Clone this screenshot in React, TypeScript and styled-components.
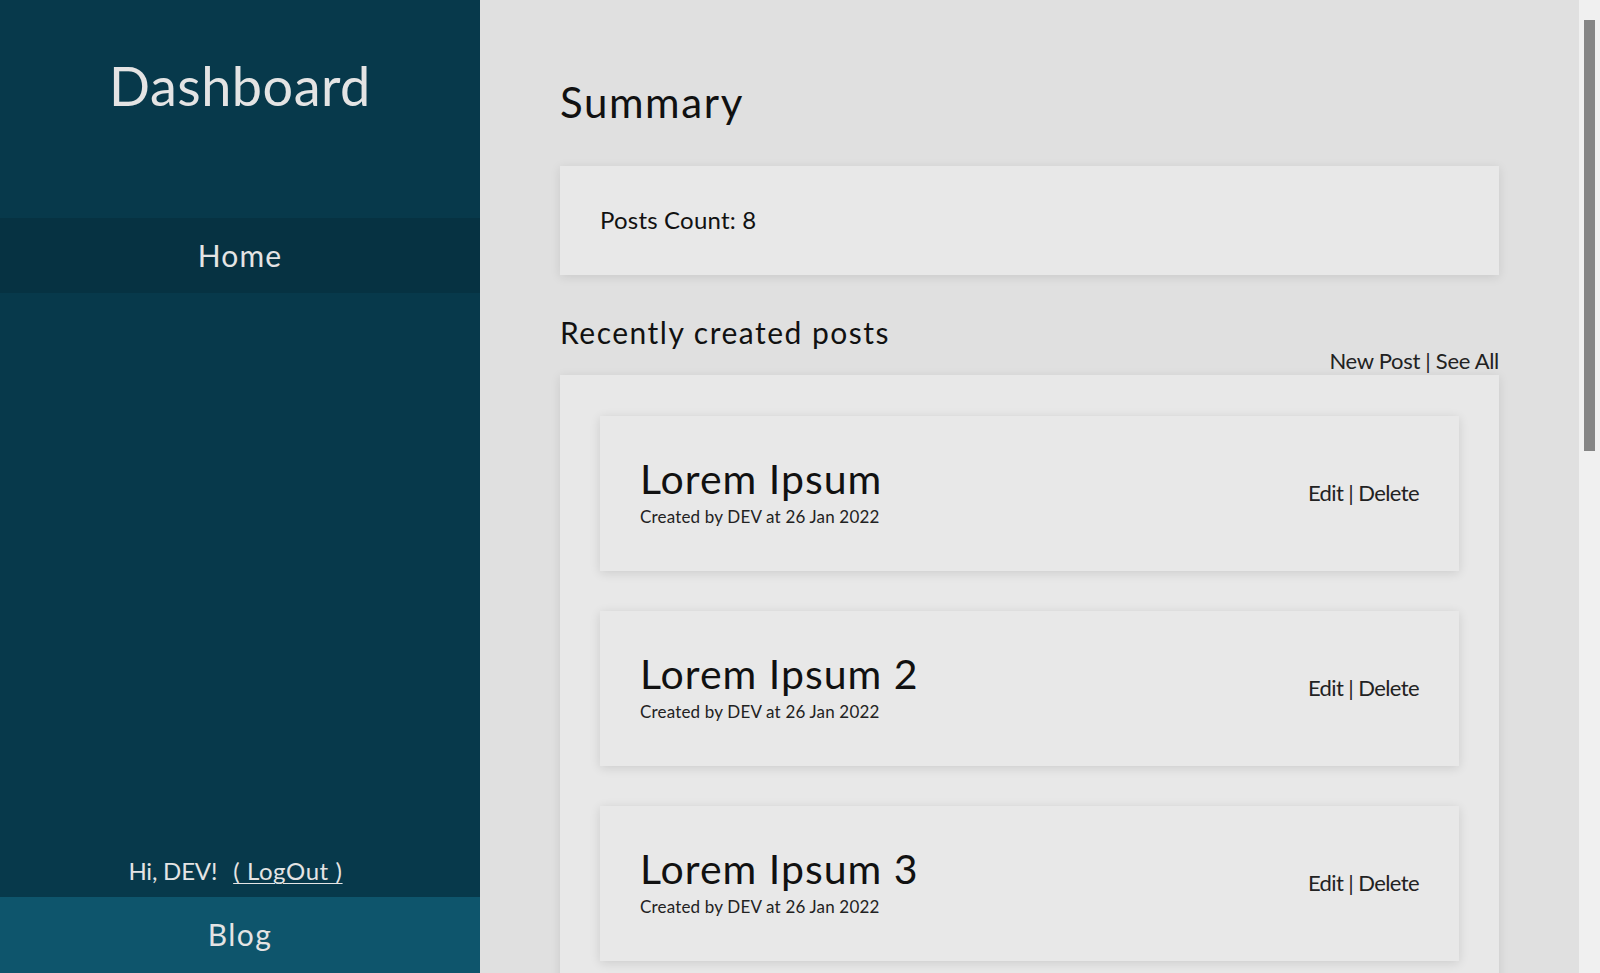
import React, { useEffect, useState } from "react";
import styled, { createGlobalStyle } from "styled-components";

const GlobalStyle = createGlobalStyle`
  html, body { margin: 0; padding: 0; }
  html { scrollbar-width: none; }
  html::-webkit-scrollbar { display: none; }
  body {
    background: #e0e0e0;
    font-family: "Lato", "Open Sans", sans-serif;
    color: #111;
  }
  * { box-sizing: border-box; }
`;

const Layout = styled.div`
  display: flex;
  align-items: flex-start;
  min-height: 100vh;
  padding-right: 21px;
`;

const Sidebar = styled.aside`
  position: sticky;
  top: 0;
  flex: 0 0 480px;
  height: 100vh;
  background: #07394b;
  color: #e4e4e4;
  display: flex;
  flex-direction: column;
`;

const Brand = styled.h1`
  margin: 0;
  height: 218px;
  padding-top: 54px;
  font-size: 54px;
  font-weight: 400;
  line-height: 1.2;
  text-align: center;
  letter-spacing: 0.5px;
`;

const NavItem = styled.a<{ $variant?: "active" | "blog" }>`
  display: flex;
  align-items: center;
  justify-content: center;
  height: ${(p) => (p.$variant === "blog" ? "76px" : "75px")};
  padding-bottom: 2px;
  background: ${(p) => (p.$variant === "blog" ? "#0e556c" : "#063242")};
  color: #e4e4e4;
  font-size: 30px;
  line-height: 1.2;
  letter-spacing: ${(p) => (p.$variant === "blog" ? "1.5px" : "1.1px")};
  text-decoration: none;
`;

const Spacer = styled.div`
  flex: 1;
`;

const UserRow = styled.div`
  display: flex;
  justify-content: center;
  gap: 16px;
  font-size: 24px;
  line-height: 1.2;
  margin-bottom: 11px;
  padding-right: 9px;
`;

const Greeting = styled.span`
  letter-spacing: -0.2px;
`;

const LogOut = styled.a`
  color: #e4e4e4;
  letter-spacing: 0.6px;
  text-decoration: underline;
  text-underline-offset: 3px;
  text-decoration-thickness: 1px;
`;

const Main = styled.main`
  flex: 1;
  padding: 77px 80px 130px;
  min-width: 0;
`;

const PageTitle = styled.h2`
  margin: 0 0 39px;
  font-size: 42px;
  font-weight: 400;
  line-height: 1.2;
  letter-spacing: 1.6px;
`;

const Card = styled.section`
  background: #e8e8e8;
  box-shadow: 0 2px 10px rgba(0, 0, 0, 0.1);
`;

const SummaryCard = styled(Card)`
  padding: 40px;
  font-size: 24px;
  line-height: 1.2;
  letter-spacing: 0.2px;
`;

const SectionTitle = styled.h3`
  margin: 39px 0 0;
  font-size: 30px;
  font-weight: 400;
  line-height: 1.2;
  letter-spacing: 1.5px;
`;

const SectionLinks = styled.div`
  margin-top: -2px;
  text-align: right;
  font-size: 22px;
  line-height: 1.2;
  letter-spacing: -0.3px;
  color: #222;
`;

const PostsCard = styled(Card)`
  padding: 41px 40px 40px;
  display: flex;
  flex-direction: column;
  gap: 40px;
`;

const PostItem = styled.article`
  height: 155px;
  padding: 0 40px;
  display: flex;
  align-items: center;
  justify-content: space-between;
  background: #e8e8e8;
  box-shadow: 0 2px 10px rgba(0, 0, 0, 0.12);
`;

const PostInfo = styled.div`
  margin-bottom: 4px;
`;

const PostTitle = styled.div`
  font-size: 41px;
  line-height: 1.2;
  letter-spacing: 1px;
  color: #111;
`;

const PostMeta = styled.div`
  margin-top: 4px;
  font-size: 17px;
  line-height: 1.2;
  letter-spacing: 0.18px;
  color: #222;
`;

const PostActions = styled.div`
  font-size: 22px;
  line-height: 1.2;
  letter-spacing: -0.6px;
  color: #222;
`;

const ScrollRail = styled.div`
  position: fixed;
  top: 0;
  right: 0;
  width: 21px;
  height: 100vh;
  padding: 20px 5px;
  background: #f0f0f0;
`;

const ScrollThumb = styled.div`
  width: 11px;
  background: #858585;
`;

const posts = [
  "Lorem Ipsum",
  "Lorem Ipsum 2",
  "Lorem Ipsum 3",
  "Lorem Ipsum 4",
  "Lorem Ipsum 5",
  "Lorem Ipsum 6",
  "Lorem Ipsum 7",
  "Lorem Ipsum 8",
];

function PageScrollbar() {
  const [thumb, setThumb] = useState({ size: 431, offset: 0 });
  useEffect(() => {
    const update = () => {
      const doc = document.documentElement;
      const track = window.innerHeight - 40;
      const ratio = window.innerHeight / Math.max(doc.scrollHeight, 1);
      const size = Math.max(20, Math.round(track * Math.min(ratio, 1)));
      const maxScroll = Math.max(doc.scrollHeight - window.innerHeight, 1);
      const offset = Math.round(((track - size) * window.scrollY) / maxScroll);
      setThumb({ size, offset });
    };
    update();
    window.addEventListener("scroll", update);
    window.addEventListener("resize", update);
    return () => {
      window.removeEventListener("scroll", update);
      window.removeEventListener("resize", update);
    };
  }, []);
  return (
    <ScrollRail aria-hidden>
      <ScrollThumb
        style={{ height: thumb.size, transform: `translateY(${thumb.offset}px)` }}
      />
    </ScrollRail>
  );
}

export default function App() {
  return (
    <>
      <GlobalStyle />
      <Layout>
        <Sidebar>
          <Brand>Dashboard</Brand>
          <NavItem $variant="active">Home</NavItem>
          <Spacer />
          <UserRow>
            <Greeting>Hi, DEV!</Greeting>
            <LogOut>( LogOut )</LogOut>
          </UserRow>
          <NavItem $variant="blog">Blog</NavItem>
        </Sidebar>
        <Main>
          <PageTitle>Summary</PageTitle>
          <SummaryCard>Posts Count: 8</SummaryCard>
          <SectionTitle>Recently created posts</SectionTitle>
          <SectionLinks>New Post | See All</SectionLinks>
          <PostsCard>
            {posts.map((t) => (
              <PostItem key={t}>
                <PostInfo>
                  <PostTitle>{t}</PostTitle>
                  <PostMeta>Created by DEV at 26 Jan 2022</PostMeta>
                </PostInfo>
                <PostActions>Edit | Delete</PostActions>
              </PostItem>
            ))}
          </PostsCard>
        </Main>
      </Layout>
      <PageScrollbar />
    </>
  );
}
